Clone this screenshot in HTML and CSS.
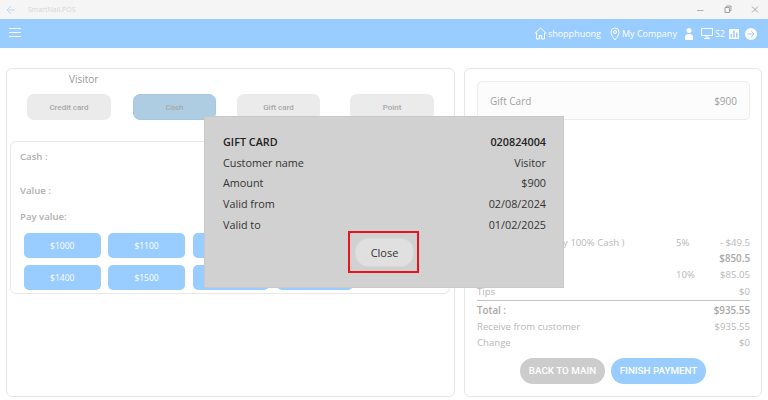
FILE: index.html
```html
<!DOCTYPE html>
<html lang="en">
<head>
<meta charset="utf-8">
<title>SmartNail.POS</title>
<link rel="stylesheet" href="styles.css">
</head>
<body>
<div class="app">
  <div class="titlebar">
    <div class="title-left">
      <svg class="back" width="10" height="10" viewBox="0 0 10 10"><path d="M9 5H1.2M4.8 1.2 1 5l3.8 3.8" fill="none" stroke="#b9dafb" stroke-width="1"/></svg>
      <span class="app-name">SmartNail.POS</span>
    </div>
    <div class="win-ctrls">
      <svg width="10" height="10" viewBox="0 0 10 10"><path d="M0 5.500h6.500" stroke="#b0b0b0"/></svg>
      <svg width="10" height="10" viewBox="0 0 10 10"><path d="M2.500 2.500V1h4.500v4.500H5.500M1 2.500h4.500v5H1z" fill="none" stroke="#a0a0a0"/></svg>
      <svg width="10" height="10" viewBox="0 0 10 10"><path d="M1 1.500l6 6M7 1.500l-6 6" stroke="#a8a8a8"/></svg>
    </div>
  </div>
  <header class="topbar">
    <div class="burger"><i></i><i></i><i></i></div>
    <div class="top-right">
      <span class="top-item"><svg width="13" height="13" viewBox="0 0 13 13"><path d="M.7 6.500 6.500 1l5.800 5.500M2.500 5.500V12h2.800V8.500h2.400V12h2.800V5.500" fill="none" stroke="#fff"/></svg>shopphuong</span>
      <span class="top-item company"><svg width="10" height="14" viewBox="0 0 10 14"><path d="M5 13C2.500 9.500 1 7.500 1 5a4 4 0 0 1 8 0c0 2.500-1.500 4.500-4 8z" fill="none" stroke="#fff"/><circle cx="5" cy="5" r="1.500" fill="none" stroke="#fff"/></svg>My Company</span>
      <svg class="person" width="8" height="12" viewBox="0 0 8 12"><circle cx="4" cy="2.500" r="2.500" fill="#fff"/><path d="M0 12V8.500A3 3 0 0 1 3 6h2a3 3 0 0 1 3 2.500V12z" fill="#fff"/></svg>
      <span class="top-item station"><svg width="12" height="11" viewBox="0 0 12 11"><rect x=".5" y=".5" width="11" height="7" fill="none" stroke="#fff"/><path d="M3 10.500h6M5 8v2M7 8v2" stroke="#fff"/></svg>S2</span>
      <svg class="chart" width="10" height="10" viewBox="0 0 10 10"><path fill="#fff" fill-rule="evenodd" d="M0 0h10v10H0zM1.500 5v3.500H3V5zM4.200 1.500v7h1.500v-7zM7 3.500v5h1.500v-5z"/></svg>
      <svg class="next" width="12" height="12" viewBox="0 0 12 12"><circle cx="6" cy="6" r="6" fill="#fff"/><path d="M2.500 6h6.500M6.300 3.300 9 6 6.300 8.700" fill="none" stroke="#99ccff"/></svg>
    </div>
  </header>
  <main class="content">
    <section class="panel left">
      <div class="visitor">Visitor</div>
      <div class="pay-methods">
        <button class="method">Credit card</button>
        <button class="method active">Cash</button>
        <button class="method">Gift card</button>
        <button class="method">Point</button>
      </div>
      <div class="pay-card">
        <div class="lbl cash">Cash :</div>
        <div class="lbl value">Value :</div>
        <div class="lbl payv">Pay value:</div>
        <div class="amounts">
          <button class="amt">$1000</button><button class="amt">$1100</button><button class="amt">$1200</button><button class="amt">$1300</button>
          <button class="amt">$1400</button><button class="amt">$1500</button><button class="amt">$1600</button><button class="amt">$1700</button>
        </div>
      </div>
    </section>
    <section class="panel right">
      <div class="gift-row"><span>Gift Card</span><span>$900</span></div>
      <div class="summary">
        <div class="row"><span class="grow">Gift Discount ( Apply 100% Cash )</span><span class="pct">5%</span><span class="val">- $49.5</span></div>
        <div class="row strong"><span class="grow">Subtotal</span><span class="val">$850.5</span></div>
        <div class="row"><span class="grow">Tax</span><span class="pct">10%</span><span class="val">$85.05</span></div>
        <div class="row ruled"><span class="grow">Tips</span><span class="val">$0</span></div>
        <div class="row strong total"><span class="grow">Total :</span><span class="val">$935.55</span></div>
        <div class="row"><span class="grow">Receive from customer</span><span class="val">$935.55</span></div>
        <div class="row"><span class="grow">Change</span><span class="val">$0</span></div>
      </div>
      <div class="actions">
        <button class="pill grey">BACK TO MAIN</button>
        <button class="pill blue">FINISH PAYMENT</button>
      </div>
    </section>
  </main>
  <div class="dialog">
    <div class="d-row head"><span>GIFT CARD</span><span>020824004</span></div>
    <div class="d-row"><span>Customer name</span><span>Visitor</span></div>
    <div class="d-row"><span>Amount</span><span>$900</span></div>
    <div class="d-row"><span>Valid from</span><span>02/08/2024</span></div>
    <div class="d-row"><span>Valid to</span><span>01/02/2025</span></div>
    <div class="d-foot"><div class="highlight"><button class="close">Close</button></div></div>
  </div>
</div>
</body>
</html>
```
FILE: styles.css
```css
* { box-sizing: border-box; }
html, body { margin: 0; padding: 0; }
body { width: 768px; height: 400px; overflow: hidden; background: #fff; font-family: "Open Sans", sans-serif; }
button { font-family: Roboto, sans-serif; border: 0; padding: 0; }
.app { position: relative; width: 768px; height: 400px; display: flex; flex-direction: column; }
.titlebar { height: 19px; background: #f5f5f5; display: flex; justify-content: space-between; align-items: center; }
.title-left { display: flex; align-items: center; padding-left: 6px; }
.back { display: block; }
.app-name { margin-left: 12px; font-size: 7px; color: #d6d6d6; }
.win-ctrls { display: flex; gap: 17px; margin-right: 7px; }
.win-ctrls svg { display: block; }
.topbar { height: 29px; background: #99ccff; display: flex; justify-content: space-between; align-items: center; padding: 0 0 0 9px; }
.burger { display: flex; flex-direction: column; gap: 2.500px; margin-top: -2px; }
.burger i { display: block; width: 12px; height: 1.500px; background: #fff; }
.top-right { display: flex; align-items: center; color: #fff; font-size: 9px; padding-right: 11px; }
.top-item { display: flex; align-items: center; gap: 1px; }
.company { margin-left: 9px; gap: 2px; }
.person { margin-left: 8px; }
.station { margin-left: 8px; gap: 2px; }
.chart { margin-left: 4px; }
.next { margin-left: 6px; }
.content { flex: 1; display: flex; gap: 9px; padding: 20px 6px 3px; }
.panel { border: 1px solid #e6e6e6; border-radius: 6px; background: #fff; }
.left { width: 449px; padding: 4px 3px; }
.right { width: 298px; padding: 12px 11px 0 12px; display: flex; flex-direction: column; }
.visitor { margin-left: 59px; font-size: 10px; line-height: 12px; color: #9a9a9a; }
.pay-methods { display: flex; margin: 9px 0 0 17px; }
.method { flex: none; width: 84px; height: 26px; background: #ebebeb; border-radius: 7px; color: #a8a8a8; font-size: 8px; font-weight: 500; margin-right: 22px; }
.method:nth-child(2) { background: #aecde2; border: 1px solid #a5c8e0; width: 83px; margin-right: 21px; }
.method:nth-child(3) { width: 83px; margin-right: 30px; }
.pay-card { margin-top: 21px; width: 440px; height: 153px; border: 1px solid #e8e8e8; border-radius: 6px; padding: 9px 13px 0 9px; color: #b0b0b0; font-size: 9.600px; font-weight: 600; }
.lbl { line-height: 12px; }
.value { margin-top: 22px; }
.payv { margin-top: 14px; }
.amounts { display: grid; grid-template-columns: repeat(4, 76.500px); gap: 7px 7.800px; margin: 10px 0 0 4px; }
.amt { height: 25px; background: #99ccff; border-radius: 5px; color: #fff; font-family: "Open Sans", sans-serif; font-size: 8.500px; }
.gift-row { height: 39px; border: 1px solid #ececec; border-radius: 5px; background: #fcfcfc; display: flex; justify-content: space-between; align-items: center; padding: 0 12px; font-size: 10px; color: #a0a0a0; }
.summary { margin-top: 114px; font-size: 9.600px; color: #b8b8b8; }
.row { display: flex; height: 16.200px; align-items: center; }
.grow { flex: 1; }
.pct { width: 30px; }
.val { width: 44px; text-align: right; }
.strong { color: #a8a8a8; font-size: 9.800px; font-weight: 600; }
.ruled { border-bottom: 1px solid #c4c4c4; height: 18.500px; }
.total { margin-top: 1px; }
.actions { display: flex; gap: 6px; justify-content: center; margin-top: 7px; padding-right: 1px; }
.pill { height: 26px; border-radius: 13px; color: #fff; font-size: 9.800px; font-weight: 500; }
.grey { width: 85px; background: #cccccc; }
.blue { width: 95px; background: #99ccff; }
.dialog { position: absolute; left: 204px; top: 116px; width: 360px; height: 172px; background: #d1d1d1; border: 1px solid #c8c8c8; padding: 14px 17px 0 18px; color: #333; font-size: 10.800px; }
.d-row { display: flex; justify-content: space-between; height: 20.800px; align-items: center; }
.head { color: #222; font-size: 10.800px; font-weight: 600; }
.d-foot { display: flex; justify-content: center; margin-top: -4px; padding-right: 2px; }
.highlight { width: 71px; height: 42px; border: 2px solid #e8141c; padding: 2px 0 0 2px; display: flex; align-items: center; justify-content: center; }
.close { width: 59px; height: 29px; background: #e0e0e0; border-radius: 13px; border: 1px solid #d8d8d8; color: #333; font-family: "Open Sans", sans-serif; font-size: 11px; }
```
